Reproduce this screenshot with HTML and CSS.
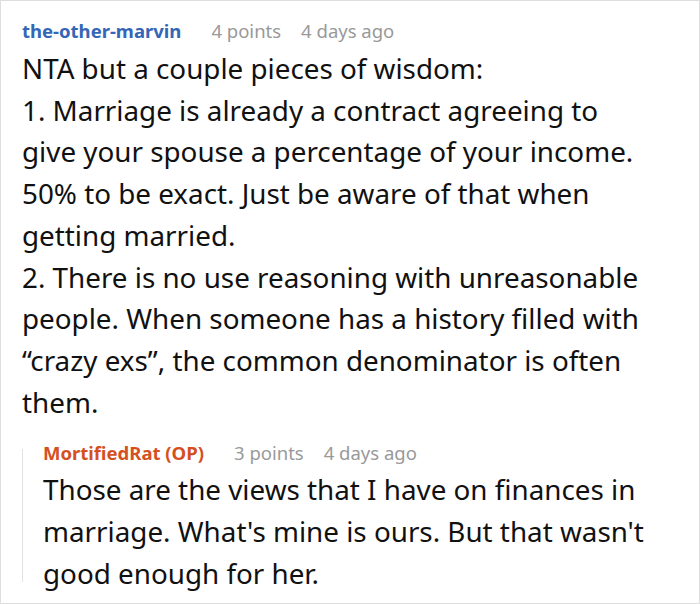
FILE: index.html
```html
<!DOCTYPE html>
<html>
<head>
<meta charset="utf-8">
<link rel="stylesheet" href="styles.css">
</head>
<body>
<div class="frame">
  <div class="comment">
    <div class="meta">
      <span class="author">the-other-marvin</span>
      <span class="info">4 points</span>
      <span class="info">4 days ago</span>
    </div>
    <div class="body">NTA but a couple pieces of wisdom:<br>1. Marriage is already a contract agreeing to give your spouse a percentage of your income. 50% to be exact. Just be aware of that when getting married.<br>2. There is no use reasoning with unreasonable people. When someone has a history filled with “crazy exs”, the common denominator is often them.</div>
    <div class="reply">
      <div class="meta">
        <span class="author op">MortifiedRat (OP)</span>
        <span class="info">3 points</span>
        <span class="info">4 days ago</span>
      </div>
      <div class="body">Those are the views that I have on finances in marriage. What's mine is ours. But that wasn't good enough for her.</div>
    </div>
  </div>
</div>
</body>
</html>
```

FILE: styles.css
```css
html, body {
  margin: 0;
  padding: 0;
  background: #fff;
}
.frame {
  box-sizing: border-box;
  width: 700px;
  height: 604px;
  border: 1px solid #dedede;
  overflow: hidden;
  font-family: "Noto Sans", sans-serif;
  color: #111;
}
.comment {
  padding: 15px 41px 0 21px;
}
.meta {
  display: flex;
  gap: 30px;
  font-size: 18.5px;
  line-height: 29px;
  height: 29px;
  margin-bottom: 3px;
}
.author {
  font-weight: 700;
  color: #3466b8;
}
.author.op {
  color: #d5501f;
}
.info {
  color: #999;
  margin-right: -10px;
}
.body {
  font-size: 27.8px;
  line-height: 41.7px;
}
.reply {
  position: relative;
  margin-top: 15px;
  padding-left: 21px;
}
.reply::before {
  content: "";
  position: absolute;
  left: 0;
  top: 11px;
  bottom: 12px;
  width: 1px;
  background: #e2e2e2;
}
.reply .meta {
  margin-bottom: 2px;
}
```
